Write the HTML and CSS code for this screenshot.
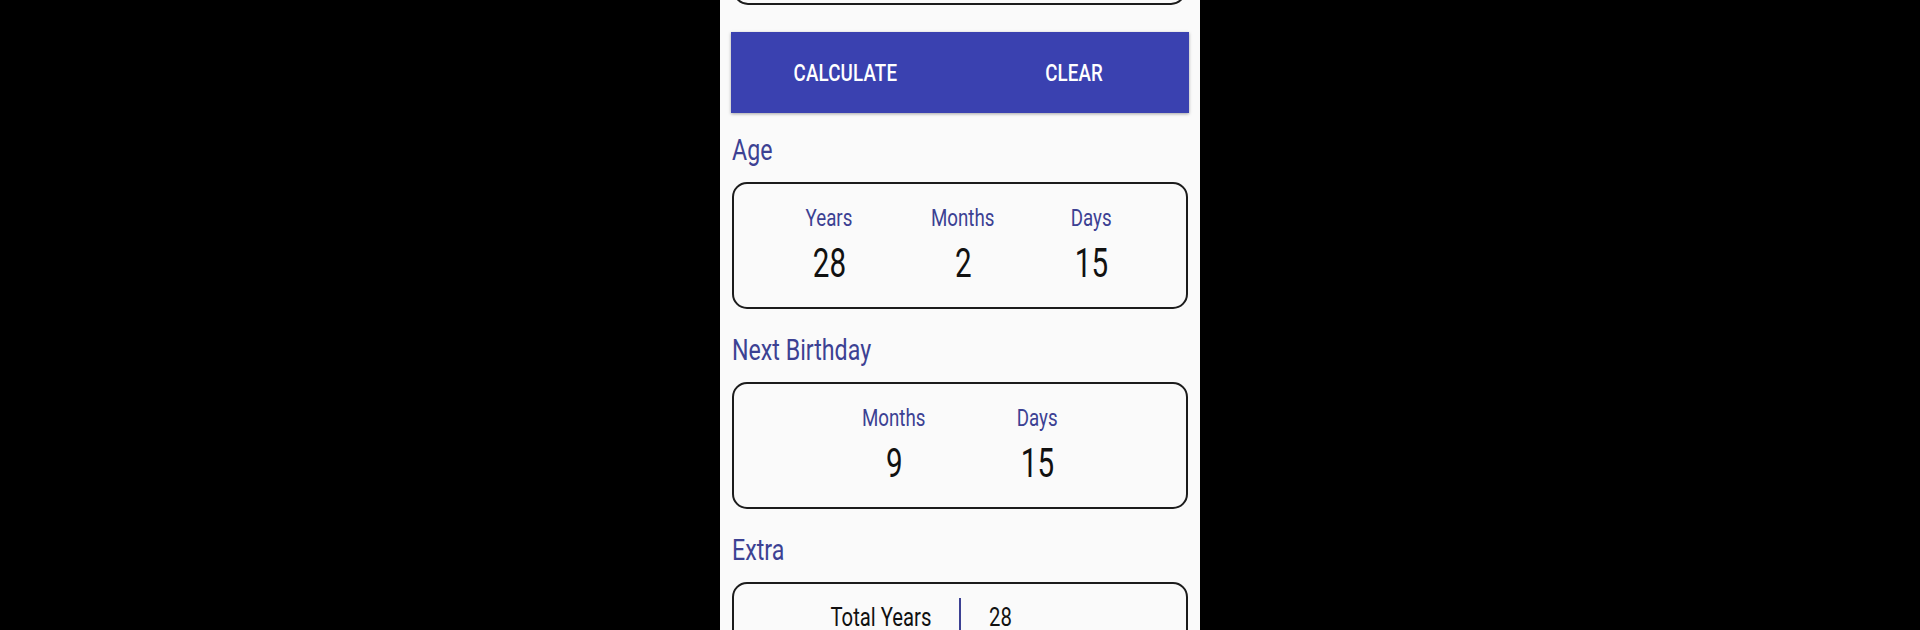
FILE: index.html
```html
<!DOCTYPE html>
<html>
<head>
<meta charset="utf-8">
<link rel="stylesheet" href="styles.css">
</head>
<body>
<div class="phone">
  <div class="card card-top"></div>
  <div class="actions">
    <div class="btn"><span class="sq">CALCULATE</span></div>
    <div class="btn"><span class="sq">CLEAR</span></div>
  </div>

  <div class="section-title first"><span class="sq sq-title">Age</span></div>
  <div class="card card-stats">
    <div class="stats three">
      <div class="stat"><div class="stat-label"><span class="sq">Years</span></div><div class="stat-value"><span class="sq sq-num">28</span></div></div>
      <div class="stat"><div class="stat-label"><span class="sq">Months</span></div><div class="stat-value"><span class="sq sq-num">2</span></div></div>
      <div class="stat"><div class="stat-label"><span class="sq">Days</span></div><div class="stat-value"><span class="sq sq-num">15</span></div></div>
    </div>
  </div>

  <div class="section-title"><span class="sq sq-title">Next Birthday</span></div>
  <div class="card card-stats">
    <div class="stats two">
      <div class="stat"><div class="stat-label"><span class="sq">Months</span></div><div class="stat-value"><span class="sq sq-num">9</span></div></div>
      <div class="stat"><div class="stat-label"><span class="sq">Days</span></div><div class="stat-value"><span class="sq sq-num">15</span></div></div>
    </div>
  </div>

  <div class="section-title"><span class="sq sq-title">Extra</span></div>
  <div class="card card-extra">
    <div class="extra-row">
      <div class="extra-key"><span class="sq sq-right">Total Years</span></div>
      <div class="extra-divider"></div>
      <div class="extra-val"><span class="sq sq-left">28</span></div>
    </div>
  </div>
</div>
</body>
</html>
```

FILE: styles.css
```css
html, body {
  margin: 0;
  padding: 0;
  background: #000;
  height: 630px;
  overflow: hidden;
}

body {
  font-family: Roboto, "Liberation Sans", sans-serif;
}

.phone {
  width: 480px;
  height: 630px;
  margin: 0 auto;
  background: #fafafa;
  overflow: hidden;
  display: flex;
  flex-direction: column;
}

.sq {
  display: inline-block;
  transform: scaleX(0.78);
  transform-origin: center;
  white-space: nowrap;
}
.sq-left { transform-origin: left center; }
.sq-right { transform-origin: right center; }
.sq-title { transform: scaleX(0.8); transform-origin: left center; }
.sq-num { transform: scaleX(0.74); }

.card {
  margin: 0 12px;
  border: 2px solid #1c1c1c;
  border-radius: 15px;
  box-sizing: border-box;
  flex: none;
}

.card-top {
  height: 40px;
  margin-top: -35px;
  margin-left: 13px;
  margin-right: 14px;
}

.actions {
  margin: 27px 11px 0;
  height: 81px;
  background: #3a41b0;
  box-shadow: 0 1px 3px rgba(0, 0, 0, 0.35);
  display: grid;
  grid-template-columns: 1fr 1fr;
  flex: none;
}

.btn {
  display: flex;
  align-items: center;
  justify-content: center;
  color: #fff;
  font-weight: 500;
  font-size: 24px;
  letter-spacing: 0.2px;
}

.section-title {
  margin: 25px 12px 0;
  font-size: 29px;
  line-height: 32px;
  height: 32px;
  color: #3c4193;
  flex: none;
}
.section-title.first { margin-top: 21px; }

.card-stats {
  margin-top: 16px;
  height: 127px;
  padding-top: 20px;
}

.stats {
  display: flex;
  justify-content: center;
}

.stats.three .stat { width: 130px; }
.stats.three .stat:nth-child(2) { margin-left: 4px; margin-right: -2px; }
.stats.two { padding-left: 11px; }
.stats.two .stat { width: 143px; }

.stat {
  text-align: center;
}

.stat-label {
  font-size: 24px;
  line-height: 28px;
  color: #3c4193;
}

.stat-value {
  margin-top: 10px;
  font-size: 40px;
  line-height: 44px;
  color: #111;
}

.card-extra {
  margin-top: 16px;
  height: 120px;
  padding-top: 14px;
}

.extra-row {
  display: grid;
  grid-template-columns: 1fr 2px 1fr;
  column-gap: 28px;
  align-items: start;
}

.extra-key {
  text-align: right;
  font-size: 26px;
  line-height: 38px;
  color: #111;
}

.extra-val {
  text-align: left;
  font-size: 26px;
  line-height: 38px;
  color: #111;
}

.extra-divider {
  height: 40px;
  background: #3c4193;
}
```
